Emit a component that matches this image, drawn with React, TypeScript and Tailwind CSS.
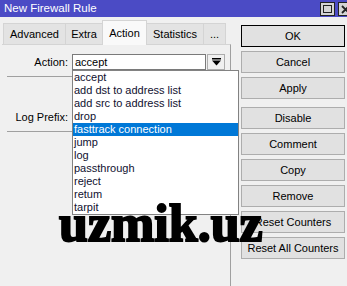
import { FC } from "react";

const actions = [
  "accept",
  "add dst to address list",
  "add src to address list",
  "drop",
  "fasttrack connection",
  "jump",
  "log",
  "passthrough",
  "reject",
  "retum",
  "tarpit",
];

const buttons = [
  "OK",
  "Cancel",
  "Apply",
  "Disable",
  "Comment",
  "Copy",
  "Remove",
  "Reset Counters",
  "Reset All Counters",
];

const DropArrow = () => (
  <svg width="9" height="8" viewBox="0 0 9 8">
    <rect x="0" y="0" width="9" height="1.5" fill="#000" />
    <polygon points="0,2.5 9,2.5 4.5,7.5" fill="#000" />
  </svg>
);

const App: FC = () => {
  return (
    <div className="relative w-[347px] h-[286px] overflow-hidden bg-[#f0f0f0] font-['Liberation_Sans',Arial,sans-serif] text-[11px] text-black">
      {/* title bar */}
      <div className="h-[17px] bg-[#4b4bc5] flex justify-between">
        <span className="text-white text-[11.5px] leading-[17px] pl-[4px]">New Firewall Rule</span>
        <div className="flex gap-[3px] mt-[2px] -mr-[5px]">
          <div className="w-[15px] h-[14px] bg-[#d4d4d4] border border-[#222] flex items-center justify-center">
            <div className="w-[9px] h-[8px] border border-[#222]" />
          </div>
          <div className="w-[14px] h-[14px] bg-[#d4d4d4] border border-[#222] flex items-center justify-center">
            <svg width="9" height="9" viewBox="0 0 9 9">
              <path d="M1 1 L8 8 M8 1 L1 8" stroke="#222" strokeWidth="1.8" />
            </svg>
          </div>
        </div>
      </div>

      <div className="flex">
        {/* left: tabs and panel */}
        <div className="w-[229px] ml-[2px] flex flex-col">
          <div className="flex items-end h-[27px] pl-[1px]">
            <div className="w-[62px] h-[21px] bg-[#e3e3e3] border-t border-l border-[#d4d4d4] flex items-center justify-center pt-[1px]">Advanced</div>
            <div className="w-[37px] h-[21px] bg-[#e3e3e3] border-t border-l border-[#d4d4d4] flex items-center justify-center pt-[1px]">Extra</div>
            <div className="w-[45px] h-[25px] bg-[#f9f9f9] border-t border-l border-r border-[#d4d4d4] -mb-[1px] flex items-start justify-center pt-[4px] relative z-10">Action</div>
            <div className="w-[56px] h-[21px] bg-[#e3e3e3] border-t border-[#d4d4d4] flex items-center justify-center pt-[1px]">Statistics</div>
            <div className="w-[23px] h-[21px] bg-[#e3e3e3] border-t border-l border-r border-[#d4d4d4] flex items-center justify-center pt-[1px]">...</div>
          </div>
          <div className="h-[242px] border-t border-r border-[#d4d4d4] border-r-[#a0a0a0] bg-[#f0f0f0] flex flex-col pt-[9px]">
            <div className="flex items-center h-[16px]">
              <span className="w-[66px] text-right">Action:</span>
              <div className="ml-[4px] w-[134px] h-[16px] bg-white border border-[#7a7a7a] pl-[2px] leading-[14px]">accept</div>
              <div className="ml-[1px] w-[18px] h-[16px] bg-[#f0f0f0] border border-[#adadad] flex items-center justify-center">
                <DropArrow />
              </div>
            </div>
            <div className="mt-[6px] ml-[5px] w-[216px] h-px bg-[#a0a0a0]" />
            <div className="mt-[32px] flex items-center h-[16px]">
              <span className="w-[66px] text-right">Log Prefix:</span>
            </div>
            <div className="mt-[6px] ml-[5px] w-[216px] h-px bg-[#a0a0a0]" />
          </div>
        </div>

        {/* right: buttons */}
        <div className="ml-[10px] mt-[8px] w-[104px] flex flex-col gap-[4px]">
          {buttons.map((b, i) => (
            <div
              key={b}
              className={
                (i === 0 ? "border-[#000] " : "border-[#adadad] ") +
                (i === 3 ? "mt-[4px] " : "") +
                "h-[22px] bg-[#e1e1e1] border flex items-center justify-center"
              }
            >
              {b}
            </div>
          ))}
        </div>
      </div>

      {/* open dropdown list */}
      <div className="absolute left-[72px] top-[70px] w-[167px] h-[145px] bg-white border border-[#828282] z-20 flex flex-col">
        {actions.map((a) => (
          <div
            key={a}
            className={
              (a === "fasttrack connection" ? "bg-[#0078d7] text-white " : "text-[#101030] ") +
              "h-[13px] leading-[13px] pl-[1px]"
            }
          >
            {a}
          </div>
        ))}
      </div>

      {/* watermark */}
      <div className="absolute left-[59px] top-[198px] z-30 font-['Liberation_Serif',serif] font-bold text-[52px] leading-[52px] text-black [-webkit-text-stroke:2px_black]">
        uzmik.uz
      </div>
    </div>
  );
};

export default App;
